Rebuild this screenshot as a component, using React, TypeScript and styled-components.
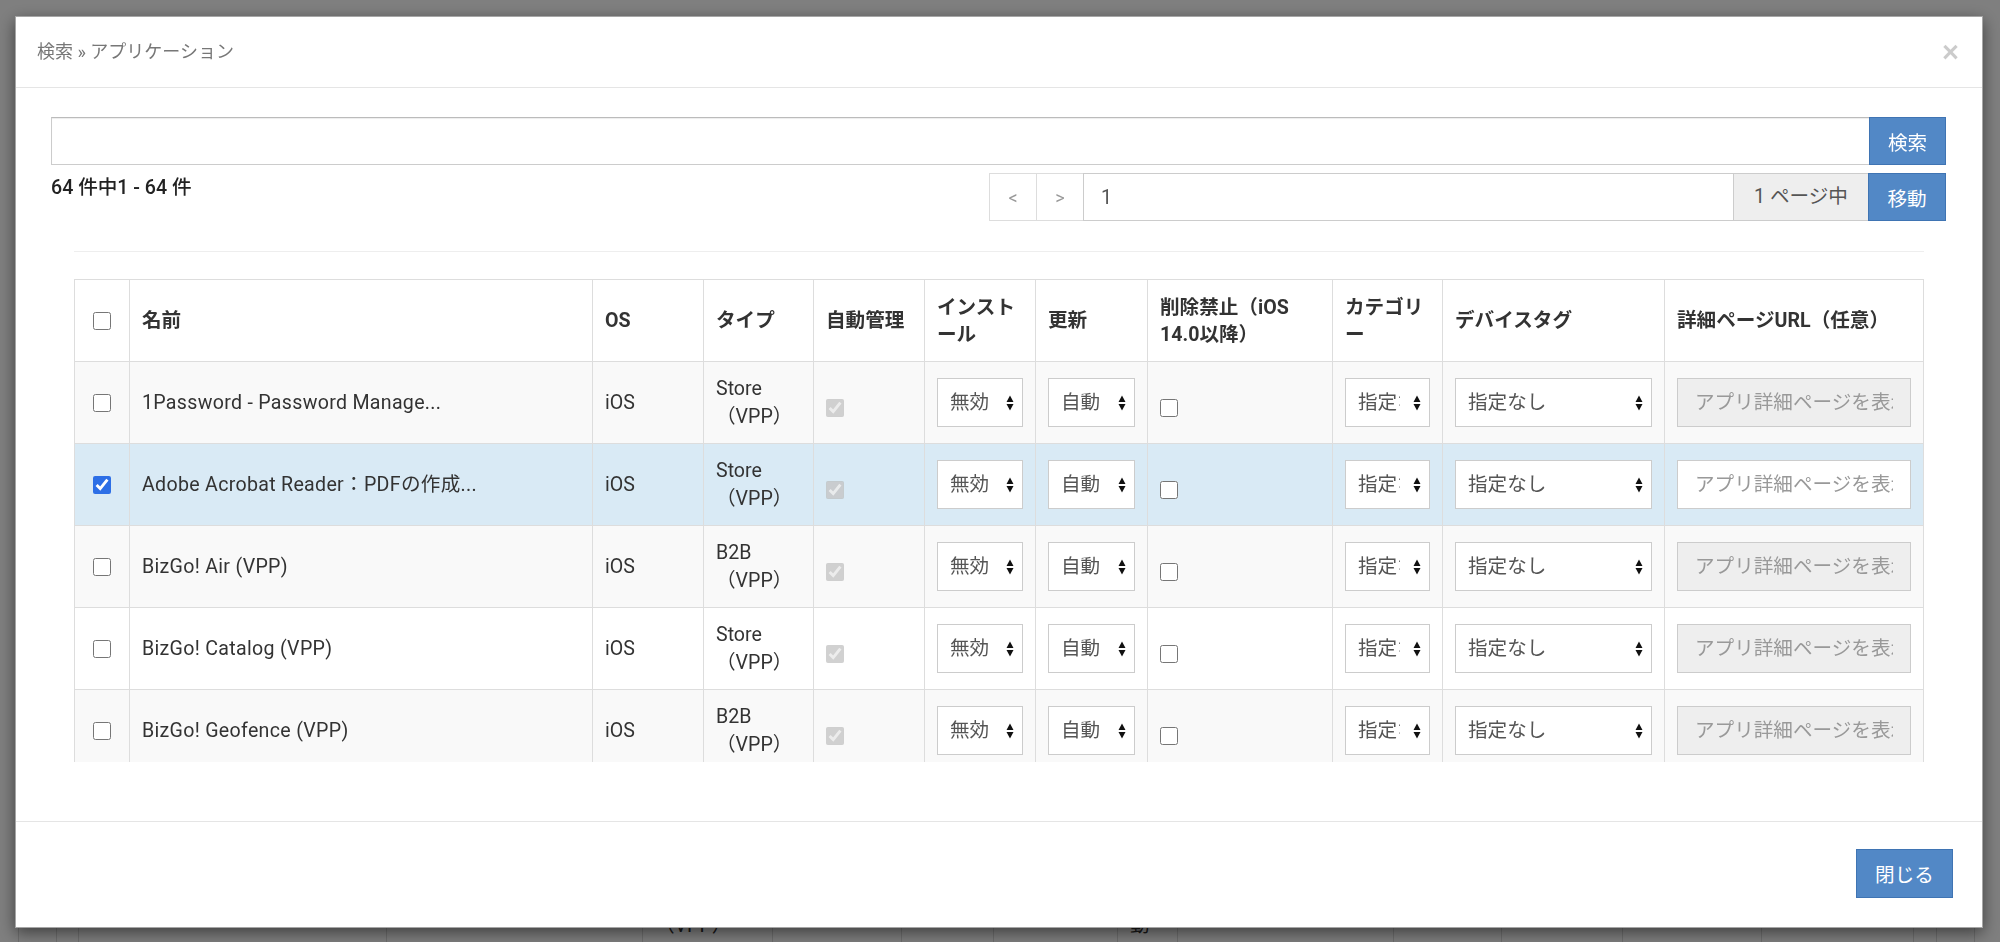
import React from "react";
import styled, { createGlobalStyle } from "styled-components";

const FONT = `Roboto, "Noto Sans CJK JP", "Noto Sans", sans-serif`;

const GlobalStyle = createGlobalStyle`
  html, body {
    margin: 0;
    padding: 0;
  }
  body {
    font-family: ${FONT};
    font-size: 19.6px;
    line-height: 28px;
    color: #333;
    overflow: hidden;
  }
  * {
    box-sizing: border-box;
  }
`;

/* ---------- page behind the modal ---------- */

const Page = styled.div`
  height: 942px;
  display: flex;
  flex-direction: column;
  justify-content: flex-end;
  background: #fff;
`;

const BgRow = styled.div`
  display: grid;
  grid-template-columns: 18px 38px 22px 308px 256px 130px 129px 92px 124px 60px 216px 108px 121px 139px 152px 23px 38px 1fr;
  height: 40px;
`;

const BgCell = styled.div<{ $first?: boolean }>`
  border-left: ${(p) => (p.$first ? "none" : "1px solid #ddd")};
  padding: 0 12px 2px;
  display: flex;
  align-items: flex-end;
  font-size: 19.6px;
  color: #333;
  white-space: nowrap;
`;

/* ---------- modal ---------- */

const Overlay = styled.div`
  position: fixed;
  inset: 0;
  background: rgba(0, 0, 0, 0.5);
  display: flex;
  padding: 16px 18px 14px 15px;
`;

const Dialog = styled.div`
  flex: 1;
  display: flex;
  flex-direction: column;
  background: #fff;
  border: 1px solid rgba(0, 0, 0, 0.35);
  box-shadow: 0 5px 15px rgba(0, 0, 0, 0.5);
`;

const Header = styled.div`
  height: 71px;
  flex-shrink: 0;
  display: flex;
  align-items: center;
  justify-content: space-between;
  padding: 0 23px 0 21px;
  border-bottom: 1px solid #e5e5e5;
`;

const Title = styled.div`
  font-size: 18px;
  color: #777;
`;

const CloseX = styled.button`
  border: 0;
  background: none;
  padding: 0;
  font-family: "Liberation Sans", Arial, sans-serif;
  font-size: 29px;
  font-weight: bold;
  line-height: 1;
  color: #000;
  opacity: 0.2;
  cursor: pointer;
`;

const Body = styled.div`
  flex: 1;
  display: flex;
  flex-direction: column;
  padding: 29px 36px 0 35px;
`;

const SearchBar = styled.div`
  display: flex;
  height: 48px;
`;

const SearchInput = styled.input`
  flex: 1;
  height: 100%;
  border: 1px solid #ccc;
  border-top-color: #bbb;
  border-right: 0;
  box-shadow: inset 0 1px 1px rgba(0, 0, 0, 0.075);
  font-family: ${FONT};
  font-size: 19.6px;
  padding: 0 17px;
  outline: none;
`;

const PrimaryButton = styled.button<{ $width: number; $height?: number }>`
  width: ${(p) => p.$width}px;
  height: ${(p) => p.$height ?? 48}px;
  flex-shrink: 0;
  border: 1px solid #3f74b3;
  background: #5288c6;
  color: #fff;
  font-family: ${FONT};
  font-size: 19.6px;
  padding: 0;
  cursor: pointer;
`;

const MetaRow = styled.div`
  display: flex;
  justify-content: space-between;
  align-items: flex-start;
  margin-top: 8px;
`;

const Count = styled.div`
  padding-top: 1px;
  font-size: 19.6px;
  font-weight: 500;
  color: #222;
`;

const Pager = styled.div`
  width: 957px;
  height: 48px;
  display: flex;
`;

const PagerButton = styled.button`
  width: 47px;
  height: 100%;
  border: 1px solid #ddd;
  border-right: 0;
  background: #fff;
  color: #999;
  font-family: ${FONT};
  font-size: 18px;
  padding: 0;
`;

const PagerInput = styled.input`
  flex: 1;
  height: 100%;
  border: 1px solid #ccc;
  font-family: ${FONT};
  font-size: 19.6px;
  color: #555;
  padding: 0 17px;
  outline: none;
`;

const PagerAddon = styled.div`
  width: 134px;
  height: 100%;
  display: flex;
  align-items: center;
  justify-content: center;
  background: #eee;
  border: 1px solid #ccc;
  border-left: 0;
  border-right: 0;
  color: #555;
  font-size: 19.6px;
  white-space: nowrap;
`;

const Section = styled.div`
  padding: 0 22px 0 23px;
`;

const Rule = styled.hr`
  margin: 30px 0 27px;
  border: 0;
  border-top: 1px solid #eee;
`;

const TableScroll = styled.div`
  height: 483px;
  overflow-y: auto;
  scrollbar-width: none;
  &::-webkit-scrollbar {
    display: none;
  }
`;

const Table = styled.table`
  width: 100%;
  table-layout: fixed;
  border-collapse: collapse;
  border: 1px solid #ddd;
`;

const Th = styled.th`
  height: 82px;
  padding: 0 12px;
  border: 1px solid #ddd;
  text-align: left;
  vertical-align: middle;
  font-weight: bold;
  font-size: 19.6px;
  line-height: 27px;
  color: #333;
`;

const Tr = styled.tr<{ $bg: string }>`
  background: ${(p) => p.$bg};
`;

const Td = styled.td`
  height: 82px;
  padding: 0 12px;
  border: 1px solid #ddd;
  vertical-align: middle;
  font-size: 19.6px;
  line-height: 28px;
  color: #333;
`;

const Name = styled.span`
  letter-spacing: 0.3px;
`;

const Check = styled.input<{ $drop?: boolean; $center?: boolean }>`
  display: block;
  width: 18px;
  height: 18px;
  margin: ${(p) => (p.$center ? "0 auto" : "0")};
  margin-top: ${(p) => (p.$drop ? "10px" : "0")};
  accent-color: #2d6fe6;
`;

const SelectWrap = styled.div`
  position: relative;
  width: 100%;
  height: 49px;
`;

const Select = styled.select`
  appearance: none;
  -webkit-appearance: none;
  width: 100%;
  height: 100%;
  border: 1px solid #ccc;
  border-radius: 0;
  background: #fff;
  padding: 0 29px 0 12px;
  font-family: ${FONT};
  font-size: 19.6px;
  color: #555;
  outline: none;
`;

const Arrows = styled.svg`
  position: absolute;
  right: 9px;
  top: 50%;
  margin-top: -8px;
  pointer-events: none;
`;

const UrlInput = styled.input`
  width: 100%;
  height: 49px;
  border: 1px solid #ccc;
  background: #fff;
  padding: 0 17px;
  font-family: ${FONT};
  font-size: 19.6px;
  color: #555;
  outline: none;
  &::placeholder {
    color: #999;
  }
  &:disabled {
    background: #eee;
  }
`;

const Footer = styled.div`
  height: 106px;
  flex-shrink: 0;
  display: flex;
  justify-content: flex-end;
  align-items: flex-start;
  padding: 27px 29px 0 0;
  border-top: 1px solid #e5e5e5;
`;

const SelectBox = ({ value }: { value: string }) => (
  <SelectWrap>
    <Select defaultValue={value}>
      <option>{value}</option>
    </Select>
    <Arrows width="8" height="16" viewBox="0 0 8 16">
      <path d="M0.5 7 L4 0.5 L7.5 7 Z M0.5 9 L4 15.5 L7.5 9 Z" fill="#111" />
    </Arrows>
  </SelectWrap>
);

const columns = [55, 463, 111, 110, 111, 111, 112, 185, 110, 222, 259];

const headers = [
  "名前",
  "OS",
  "タイプ",
  "自動管理",
  "インストール",
  "更新",
  "削除禁止（iOS 14.0以降）",
  "カテゴリー",
  "デバイスタグ",
  "詳細ページURL（任意）",
];

const apps = [
  { name: "1Password - Password Manage...", type: "Store", selected: false },
  { name: "Adobe Acrobat Reader：PDFの作成...", type: "Store", selected: true },
  { name: "BizGo! Air (VPP)", type: "B2B", selected: false },
  { name: "BizGo! Catalog (VPP)", type: "Store", selected: false },
  { name: "BizGo! Geofence (VPP)", type: "B2B", selected: false },
];

const bgCells = [
  "", "", "", "", "", "（VPP）", "", "", "", "動", "", "", "", "", "", "", "", "",
];

const rowColor = (i: number, selected: boolean) =>
  selected ? "#d9eaf5" : i % 2 === 0 ? "#f9f9f9" : "#fff";

export default function App() {
  return (
    <>
      <GlobalStyle />
      <Page>
        <BgRow>
          {bgCells.map((t, i) => (
            <BgCell key={i} $first={i === 0}>
              {t}
            </BgCell>
          ))}
        </BgRow>
      </Page>
      <Overlay>
        <Dialog>
          <Header>
            <Title>検索 » アプリケーション</Title>
            <CloseX aria-label="閉じる">×</CloseX>
          </Header>
          <Body>
            <SearchBar>
              <SearchInput type="text" />
              <PrimaryButton $width={77}>検索</PrimaryButton>
            </SearchBar>
            <MetaRow>
              <Count>64 件中1 - 64 件</Count>
              <Pager>
                <PagerButton>&lt;</PagerButton>
                <PagerButton>&gt;</PagerButton>
                <PagerInput type="text" defaultValue="1" />
                <PagerAddon>1 ページ中</PagerAddon>
                <PrimaryButton $width={78}>移動</PrimaryButton>
              </Pager>
            </MetaRow>
            <Section>
              <Rule />
              <TableScroll>
                <Table>
                  <colgroup>
                    {columns.map((w, i) => (
                      <col key={i} style={{ width: w }} />
                    ))}
                  </colgroup>
                  <thead>
                    <tr>
                      <Th>
                        <Check type="checkbox" $center />
                      </Th>
                      {headers.map((h) => (
                        <Th key={h}>{h}</Th>
                      ))}
                    </tr>
                  </thead>
                  <tbody>
                    {apps.map((app, i) => (
                      <Tr key={app.name} $bg={rowColor(i, app.selected)}>
                        <Td>
                          <Check type="checkbox" $center defaultChecked={app.selected} />
                        </Td>
                        <Td>
                          <Name>{app.name}</Name>
                        </Td>
                        <Td>iOS</Td>
                        <Td>{app.type}（VPP）</Td>
                        <Td>
                          <Check type="checkbox" $drop defaultChecked disabled />
                        </Td>
                        <Td>
                          <SelectBox value="無効" />
                        </Td>
                        <Td>
                          <SelectBox value="自動" />
                        </Td>
                        <Td>
                          <Check type="checkbox" $drop />
                        </Td>
                        <Td>
                          <SelectBox value="指定なし" />
                        </Td>
                        <Td>
                          <SelectBox value="指定なし" />
                        </Td>
                        <Td>
                          <UrlInput
                            type="text"
                            placeholder="アプリ詳細ページを表示するURL"
                            disabled={!app.selected}
                          />
                        </Td>
                      </Tr>
                    ))}
                  </tbody>
                </Table>
              </TableScroll>
            </Section>
          </Body>
          <Footer>
            <PrimaryButton $width={97} $height={49}>
              閉じる
            </PrimaryButton>
          </Footer>
        </Dialog>
      </Overlay>
    </>
  );
}
